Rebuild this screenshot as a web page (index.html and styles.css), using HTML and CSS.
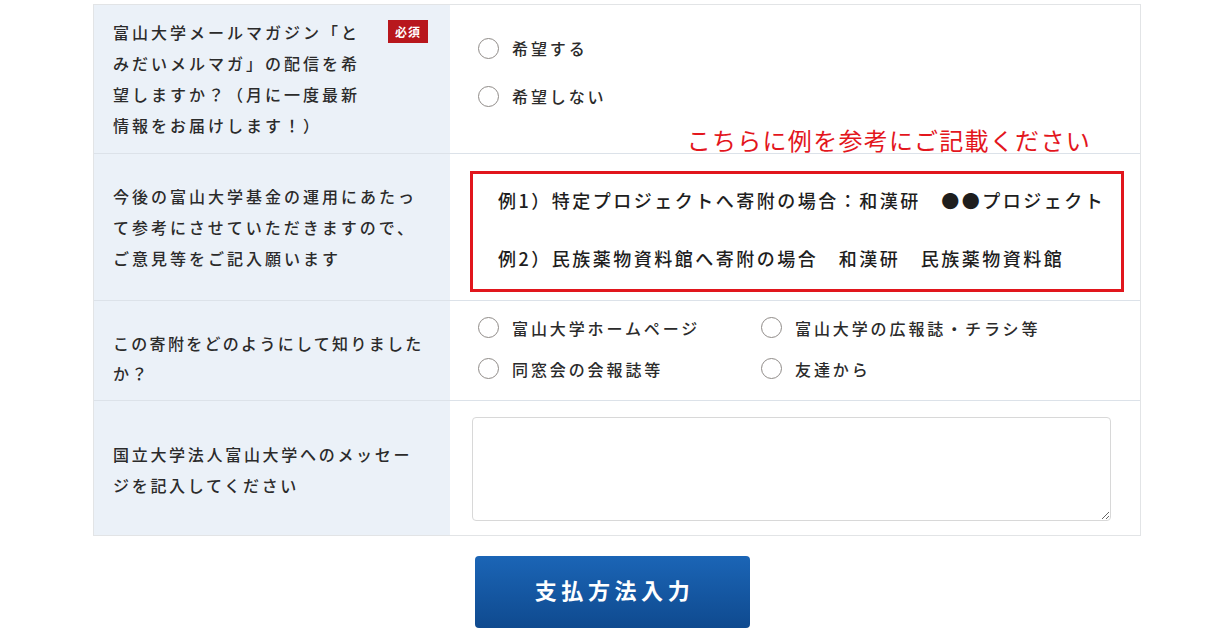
FILE: index.html
```html
<!DOCTYPE html>
<html lang="ja">
<head>
<meta charset="utf-8">
<title>寄附申込フォーム</title>
<link rel="stylesheet" href="styles.css">
</head>
<body>
<div class="form">
  <div class="row r1">
    <div class="label">
      <div class="label-inner">
        <span class="ltext">富山大学メールマガジン「と<br>みだいメルマガ」の配信を希<br>望しますか？（月に一度最新<br>情報をお届けします！）</span>
        <span class="badge">必須</span>
      </div>
    </div>
    <div class="value v1">
      <label class="radio"><input type="radio" name="mail"><span>希望する</span></label>
      <label class="radio"><input type="radio" name="mail"><span>希望しない</span></label>
      <p class="note">こちらに例を参考にご記載ください</p>
    </div>
  </div>
  <div class="row r2">
    <div class="label">
      <span class="ltext">今後の富山大学基金の運用にあたっ<br>て参考にさせていただきますので、<br>ご意見等をご記入願います</span>
    </div>
    <div class="value v2">
      <div class="example">
        <p class="ex">例1）特定プロジェクトへ寄附の場合：和漢研　●●プロジェクト</p>
        <p class="ex ex2">例2）民族薬物資料館へ寄附の場合　和漢研　民族薬物資料館</p>
      </div>
    </div>
  </div>
  <div class="row r3">
    <div class="label">
      <span class="ltext">この寄附をどのようにして知りました<br>か？</span>
    </div>
    <div class="value v3">
      <div class="radio-grid">
        <label class="radio small"><input type="radio" name="know"><span>富山大学ホームページ</span></label>
        <label class="radio small"><input type="radio" name="know"><span>富山大学の広報誌・チラシ等</span></label>
        <label class="radio small"><input type="radio" name="know"><span>同窓会の会報誌等</span></label>
        <label class="radio small"><input type="radio" name="know"><span>友達から</span></label>
      </div>
    </div>
  </div>
  <div class="row r4">
    <div class="label">
      <span class="ltext">国立大学法人富山大学へのメッセー<br>ジを記入してください</span>
    </div>
    <div class="value v4">
      <textarea class="message"></textarea>
    </div>
  </div>
</div>
<div class="actions">
  <button class="submit" type="button">支払方法入力</button>
</div>
</body>
</html>
```
FILE: styles.css
```css
html, body {
  margin: 0;
  padding: 0;
  background: #ffffff;
}
body {
  font-family: "Noto Sans CJK JP", "Noto Sans", sans-serif;
  color: #2b2b2b;
}
.form {
  margin: 4px 0 0 93px;
  width: 1048px;
  box-sizing: border-box;
  border: 1px solid #e2e4e6;
}
.row {
  display: grid;
  grid-template-columns: 356px 1fr;
  grid-template-rows: minmax(0, 1fr);
  box-sizing: border-box;
  border-bottom: 1px solid #dce2e9;
}
.r1 { height: 149px; }
.r2 { height: 147px; }
.r3 { height: 100px; }
.r4 { height: 134px; border-bottom: none; }

.label {
  background: #ebf1f8;
  padding: 0 20px 0 19px;
  display: flex;
  align-items: center;
  min-height: 0;
}
.r1 .label { align-items: flex-start; padding-top: 12px; }
.r3 .label { padding-top: 14px; }
.r4 .label { padding-top: 4px; }
.label-inner {
  display: flex;
  align-items: flex-start;
  justify-content: space-between;
  width: 100%;
}
.ltext {
  font-size: 16px;
  font-weight: 500;
  line-height: 31px;
  letter-spacing: 3px;
  color: #2b2b2b;
  white-space: nowrap;
}
.r3 .ltext { line-height: 30px; letter-spacing: 2.3px; }
.r4 .ltext { letter-spacing: 2.7px; }
.badge {
  margin-top: 3px;
  margin-right: 2px;
  width: 40px;
  height: 23px;
  background: #b8171d;
  color: #ffffff;
  font-size: 12px;
  font-weight: bold;
  line-height: 23px;
  text-align: center;
  letter-spacing: 1px;
}
.value {
  background: #ffffff;
  box-sizing: border-box;
  min-height: 0;
}
.v1 { padding: 19px 0 0 28px; }
.radio {
  display: flex;
  align-items: center;
  height: 48px;
  font-size: 16px;
  font-weight: 500;
  letter-spacing: 2.9px;
  color: #2b2b2b;
  cursor: pointer;
}
.radio.small { height: 41px; }
.radio input {
  appearance: none;
  -webkit-appearance: none;
  margin: 0 13px 0 0;
  width: 21px;
  height: 21px;
  border: 1.5px solid #8f8b88;
  border-radius: 50%;
  background: #ffffff;
  box-sizing: border-box;
  flex: none;
}
.note {
  margin: 8px 49px 0 0;
  text-align: right;
  color: #e3161d;
  font-size: 24px;
  line-height: 24px;
  letter-spacing: 1.3px;
  white-space: nowrap;
}
.v2 { padding: 17px 16px 0 20px; }
.example {
  border: 3px solid #e1161d;
  padding: 14px 10px 19px 25px;
  box-sizing: border-box;
  width: 654px;
}
.ex {
  margin: 0;
  font-size: 18px;
  font-weight: 500;
  line-height: 24px;
  letter-spacing: 2.5px;
  color: #1e1e1e;
  white-space: nowrap;
}
.ex2 { margin-top: 34px; }
.v3 { padding: 6px 0 0 28px; }
.radio-grid {
  display: grid;
  grid-template-columns: 283px auto;
}
.v4 { padding: 16px 29px 0 22px; }
.message {
  display: block;
  width: 100%;
  height: 104px;
  box-sizing: border-box;
  border: 1px solid #d8d8d8;
  border-radius: 4px;
  background: #ffffff;
  margin: 0;
  resize: vertical;
}
.actions {
  display: flex;
  justify-content: flex-start;
  padding: 20px 0 0 475px;
}
.submit {
  width: 275px;
  height: 72px;
  border: none;
  border-radius: 4px;
  background: linear-gradient(#1b65b6, #0f4a8f);
  color: #ffffff;
  font-family: "Noto Sans CJK JP", sans-serif;
  font-size: 22px;
  font-weight: bold;
  letter-spacing: 4.6px;
  padding: 0 0 6px 4px;
  cursor: pointer;
}
```
